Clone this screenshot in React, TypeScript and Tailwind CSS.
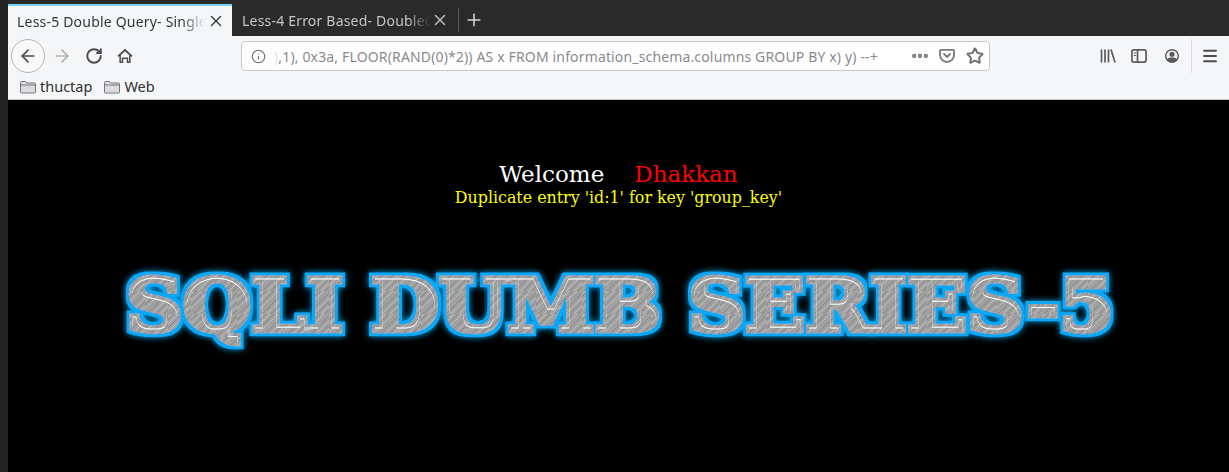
import { ArrowLeft, ArrowRight, RotateCw, Info, X, Plus, Star, MoreHorizontal, Menu } from "lucide-react";

function Tab({ title, active }: { title: string; active?: boolean }) {
  return (
    <div
      className={
        active
          ? "flex h-[32px] w-[224px] items-center border-t-2 border-[#7fd0f5] bg-[#f5f6f7] pl-[9px] pr-[7px] text-[#33363a]"
          : "flex h-[32px] w-[224px] items-center pl-[10px] pr-[7px] text-[#c6c6c6]"
      }
    >
      <span className="w-[188px] overflow-hidden whitespace-nowrap text-[14px] tracking-[0.2px] [mask-image:linear-gradient(to_right,black_88%,transparent)]">
        {title}
      </span>
      <X className="ml-auto h-[18px] w-[18px]" strokeWidth={1.8} />
    </div>
  );
}

function LibraryIcon() {
  return (
    <svg viewBox="0 0 16 16" className="h-[16px] w-[16px]" fill="none" stroke="#5b5b5e" strokeWidth="1.7">
      <path d="M1.500 1.500v13M5 1.500v13M8.500 1.500v13M11 1.500l4 13" />
    </svg>
  );
}

function SidebarIcon() {
  return (
    <svg viewBox="0 0 16 16" className="h-[16px] w-[16px]" fill="none" stroke="#5b5b5e" strokeWidth="1.700">
      <rect x="0.900" y="1.900" width="14.200" height="12.200" rx="2" />
      <path d="M6.500 2v12" />
      <path d="M2.800 5h2.200M2.800 7.500h2.200" strokeWidth="1" />
    </svg>
  );
}

function AccountIcon() {
  return (
    <svg viewBox="0 0 16 16" className="h-[16px] w-[16px]" fill="#5b5b5e">
      <path fillRule="evenodd" d="M8 1a7 7 0 1 1 0 14A7 7 0 0 1 8 1zm0 1.400a5.600 5.600 0 0 0-4.700 8.650C4.300 10.100 6 9.600 8 9.600s3.700.5 4.700 1.450A5.600 5.600 0 0 0 8 2.400z" />
      <circle cx="8" cy="6.300" r="2.600" />
    </svg>
  );
}

function PocketIcon() {
  return (
    <svg viewBox="0 0 16 16" className="h-[16px] w-[16px]" fill="none" stroke="#7a7a7c" strokeWidth="1.800">
      <path d="M2 1.800h12a1 1 0 0 1 1 1V7a7 7 0 0 1-14 0V2.800a1 1 0 0 1 1-1z" />
      <path d="M5 6l3 3 3-3" strokeLinecap="round" strokeLinejoin="round" />
    </svg>
  );
}

function HomeIcon() {
  return (
    <svg viewBox="0 0 16 16" className="h-[16px] w-[16px]" fill="#4a4a4f">
      <path fillRule="evenodd" d="M8 .8l7.600 7-1.100 1.100-.9-.8V15H9.800v-4H6.200v4H2.400V8.100l-.9.800L.4 7.800zM8 3.200L3.900 7v6.500h.9V9.500h6.400v4h.9V7z" />
    </svg>
  );
}

function FolderIcon() {
  return (
    <svg viewBox="0 0 16 16" className="h-[16px] w-[16px]" fill="#dcdcde" stroke="#77777a" strokeWidth="1">
      <path d="M.500 3.500a1 1 0 0 1 1-1h4l1.500 1.500h7.500a1 1 0 0 1 1 1v8a1 1 0 0 1-1 1h-13a1 1 0 0 1-1-1z" />
      <path d="M.500 6h15" fill="none" />
    </svg>
  );
}

function LogoTitle() {
  return (
    <svg viewBox="0 0 1040 120" className="mt-[37px] h-[120px] w-[1040px] shrink-0">
      <defs>
        <pattern id="brushed" width="23" height="23" patternUnits="userSpaceOnUse">
          <rect width="23" height="23" fill="#a0a0a0" />
          <path d="M-1 4L4 -1M-1 11L11 -1M-1 19L19 -1M6 24L24 6M14 24L24 14" stroke="#c4c4c4" strokeWidth="0.8" />
          <path d="M-1 7L7 -1M-1 15L15 -1M1 24L24 1M10 24L24 10M18 24L24 18" stroke="#828282" strokeWidth="0.8" />
        </pattern>
        <filter id="glow" x="-5%" y="-30%" width="110%" height="160%">
          <feMorphology in="SourceAlpha" operator="dilate" radius="2.500" result="fat" />
          <feFlood floodColor="#08a8f5" />
          <feComposite in2="fat" operator="in" result="rim" />
          <feGaussianBlur in="rim" stdDeviation="3" result="soft" />
          <feMorphology in="SourceAlpha" operator="erode" radius="2.500" result="inner" />
          <feOffset in="inner" dy="1" result="shifted" />
          <feComposite in="inner" in2="shifted" operator="out" result="edge" />
          <feFlood floodColor="#ffffff" />
          <feComposite in2="edge" operator="in" result="highlight" />
          <feMerge>
            <feMergeNode in="soft" />
            <feMergeNode in="rim" />
            <feMergeNode in="SourceGraphic" />
            <feMergeNode in="highlight" />
          </feMerge>
        </filter>
      </defs>
      <text
        x="27"
        y="86"
        textLength="988"
        lengthAdjust="spacingAndGlyphs"
        fontFamily="'DejaVu Serif', serif"
        fontWeight="700"
        fontSize="72"
        fill="url(#brushed)"
        stroke="url(#brushed)"
        strokeWidth="4.500"
        strokeLinejoin="miter"
        filter="url(#glow)"
      >
        SQLI DUMB SERIES-5
      </text>
    </svg>
  );
}

export default function App() {
  return (
    <div className="flex h-[472px] w-[1229px] overflow-hidden bg-[#232323] font-['Noto_Sans','Open_Sans',sans-serif]">
      <div className="w-[8px] shrink-0" />
      <div className="flex min-w-0 flex-1 flex-col">
        <div className="flex h-[36px] items-end bg-[#2a2a2a]">
          <Tab title="Less-5 Double Query- Single Quotes" active />
          <Tab title="Less-4 Error Based- DoubleQuotes" />
          <div className="mb-[4px] ml-[2px] h-[24px] w-px bg-[#5a5a5a]" />
          <Plus className="mb-[6px] ml-[5px] h-[20px] w-[20px] text-[#d8d8d8]" strokeWidth={1.8} />
        </div>

        <div className="flex h-[40px] items-center bg-[#f5f6f7] text-[#4a4a4f]">
          <div className="ml-[3px] flex h-[34px] w-[34px] items-center justify-center rounded-full border border-[#b4b4b4] bg-[#f9f9fa]">
            <ArrowLeft className="h-[20px] w-[20px]" strokeWidth={2} />
          </div>
          <ArrowRight className="ml-[7px] h-[20px] w-[20px] text-[#b2b2b3]" strokeWidth={2} />
          <RotateCw className="ml-[13px] h-[18px] w-[18px]" strokeWidth={2.6} />
          <div className="ml-[14px]"><HomeIcon /></div>

          <div className="ml-[108px] flex h-[30px] w-[749px] items-center rounded-[4px] border border-[#c8c8ca] bg-white pl-[9px] pr-[5px]">
            <Info className="h-[15px] w-[15px] text-[#6b6b6d]" strokeWidth={1.8} />
            <span className="ml-[8px] w-[625px] overflow-hidden whitespace-nowrap text-[14px] tracking-[0.15px] text-[#8a8a8d]">
              <span className="text-[#e2e2e4]">)</span>,1), 0x3a, FLOOR(RAND(0)*2)) AS x FROM information_schema.columns GROUP BY x) y) --+
            </span>
            <MoreHorizontal className="ml-auto h-[20px] w-[20px] text-[#77777a]" strokeWidth={3.2} />
            <div className="ml-[9px]"><PocketIcon /></div>
            <Star className="ml-[11px] h-[18px] w-[18px] text-[#6f6f72]" strokeWidth={2.6} />
          </div>

          <div className="ml-[110px]"><LibraryIcon /></div>
          <div className="ml-[15px]"><SidebarIcon /></div>
          <div className="ml-[17px]"><AccountIcon /></div>
          <div className="ml-[11px] h-[34px] w-px bg-[#dcdcde]" />
          <Menu className="ml-[9px] h-[18px] w-[18px]" strokeWidth={2.4} />
        </div>

        <div className="flex h-[24px] items-center gap-[12px] border-b border-[#c4c4c6] bg-[#f5f6f7] pb-[1px] pl-[12px] text-[14.5px] text-[#2f2f33]">
          <span className="flex items-center gap-[4px]">
            <FolderIcon />
            thuctap
          </span>
          <span className="flex items-center gap-[4px]">
            <FolderIcon />
            Web
          </span>
        </div>

        <main className="flex flex-1 flex-col items-center bg-black font-['DejaVu_Serif',serif]">
          <div className="mt-[60px] text-[23px] leading-[28px] text-white">
            Welcome<span className="ml-[30px] text-[#ff0000]">Dhakkan</span>
          </div>
          <div className="text-[15.85px] leading-[20px] text-[#ffff00]">Duplicate entry 'id:1' for key 'group_key'</div>
          <LogoTitle />
        </main>
      </div>
    </div>
  );
}
